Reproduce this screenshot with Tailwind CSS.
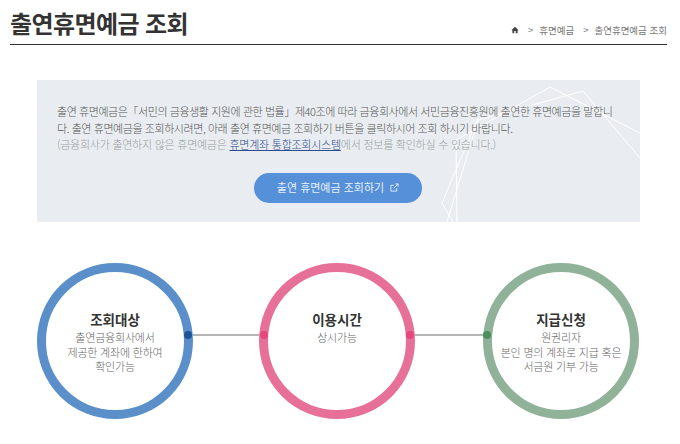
<!DOCTYPE html>
<html lang="ko">
  <head>
    <meta charset="UTF-8" />
    <title>출연휴면예금 조회</title>
    <script src="https://cdn.jsdelivr.net/npm/@tailwindcss/browser@4"></script>
  </head>
  <body class="bg-white font-['Noto_Sans_CJK_KR','Liberation_Sans',sans-serif]">
    <div class="w-[680px] h-[444px] overflow-hidden">
      <!-- header -->
      <div class="ml-[10px] mr-[13px] h-[45px] flex items-end justify-between border-b border-[#333]">
        <h1 class="text-[24px] leading-[30px] mb-[6px] font-bold text-[#333] tracking-[-0.6px]">출연휴면예금 조회</h1>
        <div class="flex items-center text-[9.5px] leading-[14px] mb-[7px] text-[#777]">
          <svg class="w-[8px] h-[8px] mr-[9px]" viewBox="0 0 12 12" fill="#444">
            <path d="M6 1 0.5 6.2h1.6V11h2.8V7.6h2.2V11h2.8V6.2h1.6z" />
          </svg>
          <span class="mr-[6px]">&gt;</span>
          <span class="mr-[9px]">휴면예금</span>
          <span class="mr-[6px]">&gt;</span>
          <span>출연휴면예금 조회</span>
        </div>
      </div>

      <!-- notice panel -->
      <div class="relative overflow-hidden ml-[37px] mt-[35px] w-[603px] h-[142px] bg-[#e9edf1] pt-[23px] pl-[20px] pr-[26px]">
        <svg class="absolute left-0 top-0" width="603" height="142" fill="none" stroke="#fff" stroke-width="1">
          <path d="M420 142 419 60 513 7 603 53M410 142 441 40 546 11 603 78M416 142 405 123 441 38" />
        </svg>
        <div class="relative text-[11px] leading-[16.5px] font-light text-[#555] break-all">
          <p class="tracking-[-0.43px]">출연 휴면예금은「서민의 금융생활 지원에 관한 법률」제40조에 따라 금융회사에서 서민금융진흥원에 출연한 휴면예금을 말합니다. 출연 휴면예금을 조회하시려면, 아래 출연 휴면예금 조회하기 버튼을 클릭하시어 조회 하시기 바랍니다.</p>
          <p class="text-[#999da1] tracking-[-0.25px]">(금융회사가 출연하지 않은 휴면예금은 <a class="underline text-[#2c4a8c]">휴면계좌 통합조회시스템</a>에서 정보를 확인하실 수 있습니다.)</p>
        </div>
        <a class="relative ml-[197px] mt-[20px] flex items-center justify-center w-[168px] h-[30px] rounded-full bg-[#5590d9] text-[11px] text-[#e8f0fa]">
          출연 휴면예금 조회하기
          <svg class="ml-[6px] w-[9px] h-[9px]" viewBox="0 0 10 10" fill="none" stroke="currentColor" stroke-width="1">
            <path d="M7.5 5.5V9H1V2.5H4.5M4 6 9 1M6 1H9V4" />
          </svg>
        </a>
      </div>

      <!-- steps -->
      <div class="flex ml-[37px] mt-[41px] w-[602px]">
        <div class="relative shrink-0 w-[156px] h-[156px] rounded-full border-[9px] border-[#5a8fca] flex flex-col items-center pt-[38px] text-center">
          <span class="absolute right-[-8px] top-[59px] w-[8px] h-[8px] rounded-full bg-[#1d5596]"></span>
          <h2 class="text-[13.5px] leading-[18px] font-bold text-[#333]">조회대상</h2>
          <p class="mt-[2px] text-[11px] leading-[14.5px] font-light tracking-[-0.2px] text-[#666]">출연금융회사에서<br />제공한 계좌에 한하여<br />확인가능</p>
        </div>
        <div class="w-[66px] h-[2px] mt-[71px] bg-[#b5b5b5]"></div>
        <div class="relative shrink-0 w-[156px] h-[156px] rounded-full border-[9px] border-[#e77098] flex flex-col items-center pt-[38px] text-center">
          <span class="absolute left-[-8px] top-[59px] w-[8px] h-[8px] rounded-full bg-[#e5487d]"></span>
          <span class="absolute right-[-8px] top-[59px] w-[8px] h-[8px] rounded-full bg-[#e5487d]"></span>
          <h2 class="text-[13.5px] leading-[18px] font-bold text-[#333]">이용시간</h2>
          <p class="mt-[2px] text-[11px] leading-[14.5px] font-light tracking-[-0.2px] text-[#666]">상시가능</p>
        </div>
        <div class="flex-1 h-[2px] mt-[71px] bg-[#b5b5b5]"></div>
        <div class="relative shrink-0 w-[156px] h-[156px] rounded-full border-[9px] border-[#8fb298] flex flex-col items-center pt-[38px] text-center">
          <span class="absolute left-[-9px] top-[59px] w-[8px] h-[8px] rounded-full bg-[#4c8f5e]"></span>
          <h2 class="text-[13.5px] leading-[18px] font-bold text-[#333]">지급신청</h2>
          <p class="mt-[2px] text-[11px] leading-[14.5px] font-light tracking-[-0.2px] text-[#666]">원권리자<br />본인 명의 계좌로 지급 혹은<br />서금원 기부 가능</p>
        </div>
      </div>
    </div>
  </body>
</html>
